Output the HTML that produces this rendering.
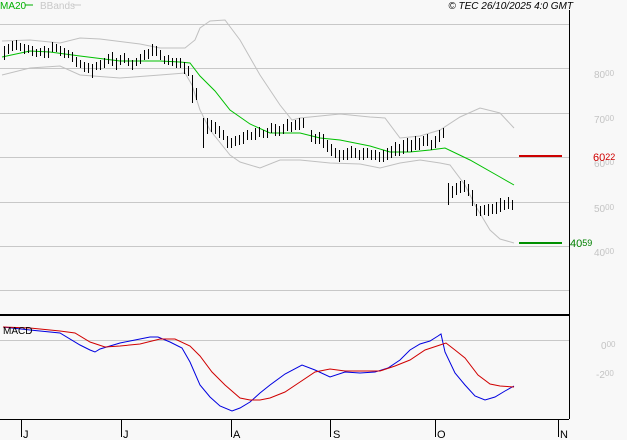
<!DOCTYPE html>
<html><head><meta charset="utf-8"><style>
html,body{margin:0;padding:0;background:#f8f8f8;}
svg{display:block;font-family:"Liberation Sans",sans-serif;}
</style></head><body>
<svg width="627" height="440" viewBox="0 0 627 440" xmlns="http://www.w3.org/2000/svg">
<rect width="627" height="440" fill="#f8f8f8"/>
<g stroke="#c8c8c8" stroke-width="1">
<line x1="0" y1="24.5" x2="569" y2="24.5"/>
<line x1="0" y1="68.5" x2="569" y2="68.5"/>
<line x1="0" y1="113.5" x2="569" y2="113.5"/>
<line x1="0" y1="157.5" x2="569" y2="157.5"/>
<line x1="0" y1="202.5" x2="569" y2="202.5"/>
<line x1="0" y1="246.5" x2="569" y2="246.5"/>
<line x1="0" y1="290.5" x2="569" y2="290.5"/>
<line x1="0" y1="340.5" x2="569" y2="340.5"/>
</g>
<line x1="569.5" y1="10" x2="569.5" y2="419" stroke="#000"/>
<line x1="0" y1="315" x2="569" y2="315" stroke="#000" stroke-width="2"/>
<line x1="0" y1="419.5" x2="569" y2="419.5" stroke="#000"/>
<g stroke="#000"><line x1="21.5" y1="419" x2="21.5" y2="437"/><line x1="121.5" y1="419" x2="121.5" y2="437"/><line x1="231.5" y1="419" x2="231.5" y2="437"/><line x1="330.5" y1="419" x2="330.5" y2="437"/><line x1="435.5" y1="419" x2="435.5" y2="437"/><line x1="558.5" y1="419" x2="558.5" y2="437"/></g>
<g font-size="11" fill="#000"><text x="23" y="438">J</text><text x="123" y="438">J</text><text x="233" y="438">A</text><text x="333" y="438">S</text><text x="437" y="438">O</text><text x="560" y="438">N</text></g>
<g font-size="10" fill="#c4c4c4"><text x="594" y="78">80<tspan font-size="8" dy="-2">00</tspan></text><text x="594" y="123">70<tspan font-size="8" dy="-2">00</tspan></text><text x="594" y="167">60<tspan font-size="8" dy="-2">00</tspan></text><text x="594" y="212">50<tspan font-size="8" dy="-2">00</tspan></text><text x="594" y="256">40<tspan font-size="8" dy="-2">00</tspan></text><text x="601" y="349">0<tspan font-size="8" dy="-2">00</tspan></text><text x="596" y="378">-2<tspan font-size="8" dy="-2">00</tspan></text></g>
<text x="593" y="161" font-size="11" fill="#d00000">60<tspan font-size="9" dy="-1">22</tspan></text>
<text x="570" y="247" font-size="11" fill="#008000">40<tspan font-size="9" dy="-1">59</tspan></text>
<line x1="519" y1="156" x2="562" y2="156" stroke="#cc0000" stroke-width="2"/>
<line x1="519" y1="243" x2="562" y2="243" stroke="#009000" stroke-width="2"/>
<text x="0" y="9" font-size="10" fill="#00b000">MA20</text><line x1="25" y1="5" x2="33" y2="5" stroke="#00b000"/>
<text x="40" y="9" font-size="10" fill="#c8c8c8">BBands</text><line x1="73" y1="5" x2="81" y2="5" stroke="#c8c8c8"/>
<text x="573" y="9" font-size="10" font-style="italic" fill="#000" text-anchor="end">© TEC 26/10/2025 4:0 GMT</text>
<g fill="none" stroke="#c0c0c0">
<polyline points="2,41 30,40 60,43 80,38 100,39 140,44 160,48 185,48 195,40 200,28 210,21 225,20 240,40 260,75 280,105 292,120 300,118 340,114 370,117 385,118 400,138 420,136 440,130 460,117 480,108 500,113 514,128"/>
<polyline points="2,75 30,68 60,66 80,75 120,78 160,75 185,73 192,85 200,110 210,130 230,155 240,162 260,168 280,160 300,160 330,163 360,164 380,168 400,163 420,160 440,163 450,165 465,185 475,205 490,230 500,239 514,243"/>
</g>
<polyline fill="none" stroke="#00c000" points="2,57 30,51 50,52 80,56 120,61 160,61 180,62 190,63 200,76 215,91 230,110 250,124 270,133 300,133 320,138 340,140 370,146 390,152 410,152 430,150 445,148 470,160 500,177 514,185"/>
<g stroke="#000" stroke-width="1" fill="none">
<path d="M4.5 46v14M8.5 44v10M12.5 41v10M16.5 40v10M20.5 43v8M24.5 44v10M28.5 45v8M32.5 46v10M36.5 49v8M40.5 48v8M44.5 46v12M48.5 48v10M52.5 42v10M56.5 44v8M60.5 46v10M64.5 48v10M68.5 50v8M72.5 52v10M76.5 57v10M80.5 60v8M84.5 62v10M88.5 63v10M92.5 64v14M96.5 62v8M100.5 60v10M104.5 58v10M108.5 54v10M112.5 52v14M116.5 58v12M120.5 55v10M124.5 53v10M128.5 58v8M132.5 60v10M136.5 58v8M140.5 54v10M144.5 50v10M148.5 49v10M152.5 44v12M156.5 46v10M160.5 50v10M164.5 56v8M168.5 55v10M172.5 58v8M176.5 58v10M180.5 58v10M184.5 62v12M188.5 66v10M192.5 75v28M196.5 88v12M203.5 118v30M207.5 118v16M211.5 120v12M215.5 122v12M219.5 126v12M223.5 130v10M227.5 136v12M231.5 138v10M235.5 136v10M239.5 135v10M243.5 132v12M247.5 130v10M251.5 132v8M255.5 128v12M259.5 127v10M263.5 130v8M267.5 128v10M271.5 123v10M275.5 124v12M279.5 126v10M283.5 124v10M287.5 119v12M291.5 122v10M295.5 120v10M299.5 118v12M303.5 118v10M311.5 130v12M315.5 134v10M319.5 132v12M323.5 134v14M327.5 140v12M331.5 144v12M335.5 148v10M339.5 150v12M343.5 150v10M347.5 148v12M351.5 146v12M355.5 148v10M359.5 150v10M363.5 148v12M367.5 148v10M371.5 150v10M375.5 150v10M379.5 152v10M383.5 150v12M387.5 148v12M391.5 146v12M395.5 142v14M399.5 144v12M403.5 140v14M407.5 138v14M411.5 140v12M415.5 136v14M419.5 138v12M423.5 136v10M427.5 134v12M431.5 140v10M435.5 136v12M439.5 130v12M443.5 128v10M448.5 183v22M452.5 186v12M456.5 183v12M460.5 181v12M464.5 180v12M468.5 184v12M472.5 190v16M476.5 204v12M480.5 206v10M484.5 205v10M488.5 204v12M492.5 204v10M496.5 202v12M500.5 198v14M504.5 200v10M508.5 197v12M512.5 200v10"/>
</g>
<polyline fill="none" stroke="#0000e0" points="3,327 30,330 40,331 60,333 80,345 90,350 95,352 100,349 110,346 120,343 130,341 140,339 150,337 158,337 170,342 182,348 190,362 200,385 210,397 220,406 232,411 240,408 250,402 260,393 270,385 285,374 302,365 315,370 330,377 345,372 360,373 375,372 388,368 400,360 410,350 420,344 430,341 438,336 441,334 445,352 455,373 465,385 475,396 485,400 495,397 505,391 514,386"/>
<polyline fill="none" stroke="#d00000" points="3,327 30,328 60,331 75,333 90,342 105,347 120,346 140,344 160,339 175,339 190,346 200,356 212,372 225,385 240,398 250,400 260,400 270,398 285,392 300,382 315,372 330,369 345,371 360,371 380,371 395,366 410,360 425,350 440,345 446,343 455,350 465,358 478,375 490,384 500,386 514,387"/>
<text x="3" y="334" font-size="10" fill="#000">MACD</text>
</svg>
</body></html>
